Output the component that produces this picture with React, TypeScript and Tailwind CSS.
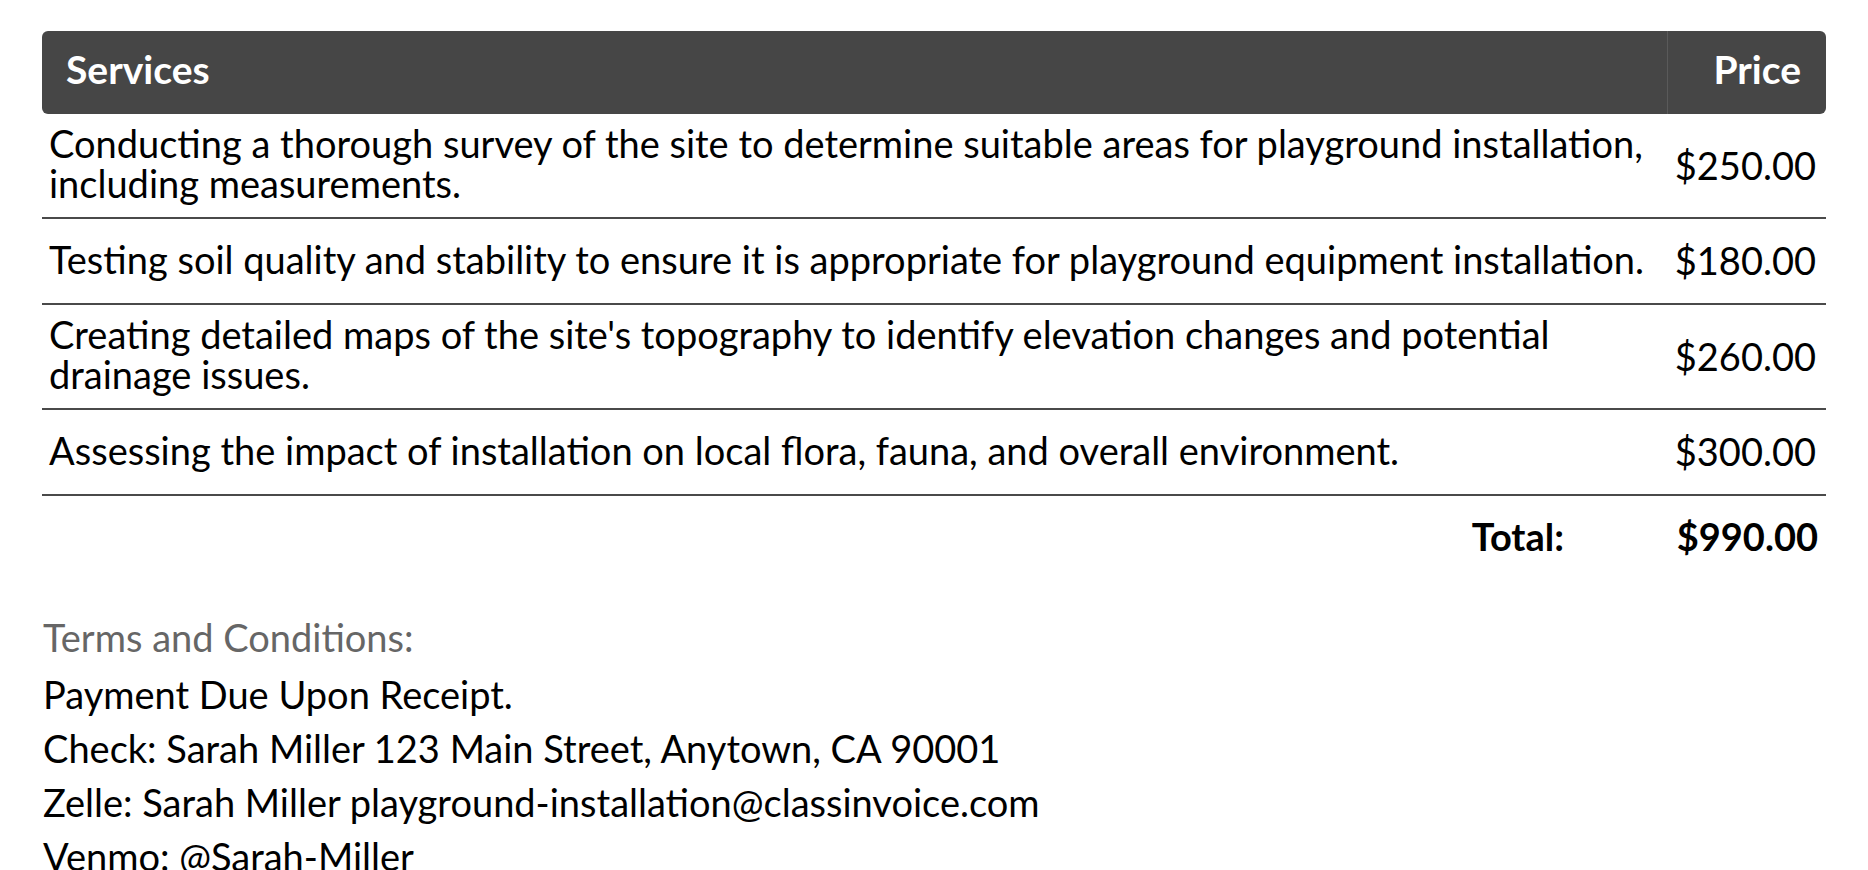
import React from "react";

const rows = [
  {
    desc: "Conducting a thorough survey of the site to determine suitable areas for playground installation, including measurements.",
    price: "$250.00",
  },
  {
    desc: "Testing soil quality and stability to ensure it is appropriate for playground equipment installation.",
    price: "$180.00",
  },
  {
    desc: "Creating detailed maps of the site's topography to identify elevation changes and potential drainage issues.",
    price: "$260.00",
  },
  {
    desc: "Assessing the impact of installation on local flora, fauna, and overall environment.",
    price: "$300.00",
  },
];

export default function App() {
  return (
    <div
      className="min-h-screen bg-white px-[42px] pt-[31px] text-black"
      style={{ fontFamily: "Lato, 'Open Sans', sans-serif" }}
    >
      <div className="grid grid-cols-[1fr_159px] h-[83px] rounded-[6px] bg-[#464646] text-white font-bold text-[39px]">
        <div className="flex items-center pl-[24px] pb-[6px]">Services</div>
        <div className="flex items-center justify-end pr-[25px] pb-[6px] border-l border-[#5a5a5a]">Price</div>
      </div>
      {rows.map((r) => (
        <div
          key={r.price}
          className="grid grid-cols-[1fr_159px] items-center border-b-2 border-[#4a4a4a] text-[38px] leading-[40px]"
        >
          <div className="px-[7px] pt-[9px] pb-[14px]">{r.desc}</div>
          <div className="flex justify-end pr-[10px] pt-[21px] pb-[23px]">{r.price}</div>
        </div>
      ))}
      <div className="grid grid-cols-[1fr_159px] items-center pt-[20px] text-[38px] leading-[40px] font-bold">
        <div className="text-right pr-[103px]">Total:</div>
        <div className="text-right pr-[8px]">$990.00</div>
      </div>
      <div className="pt-[54px] pl-[1px] text-[38px] leading-[54px]">
        <div className="text-[#666666]">Terms and Conditions:</div>
        <div className="pt-[3px]">Payment Due Upon Receipt.</div>
        <div>Check: Sarah Miller 123 Main Street, Anytown, CA 90001</div>
        <div>Zelle: Sarah Miller playground-installation@classinvoice.com</div>
        <div>Venmo: @Sarah-Miller</div>
      </div>
    </div>
  );
}
